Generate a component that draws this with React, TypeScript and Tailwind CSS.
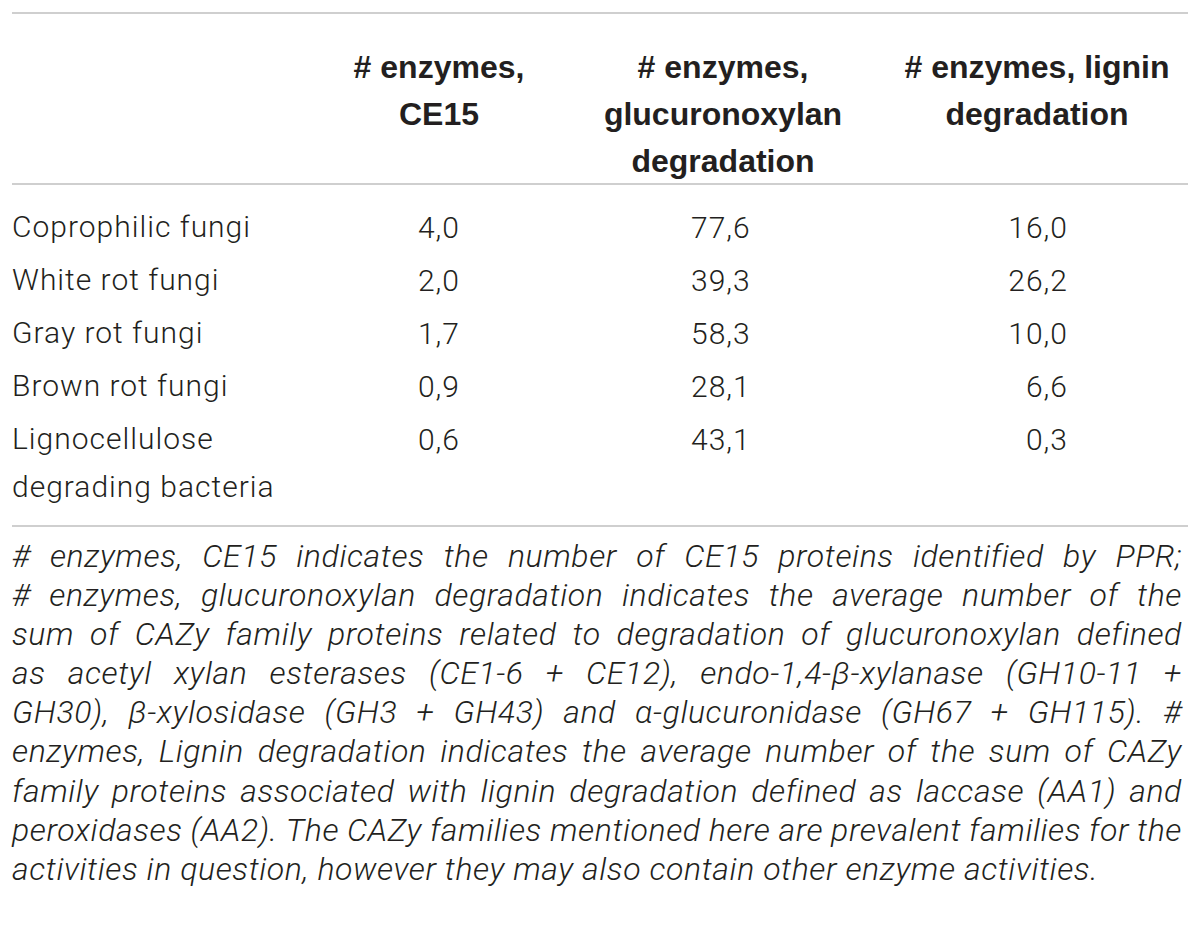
import React from 'react'

interface IRow {
  label: string[]
  ce15: string
  glucuronoxylan: string
  lignin: string
}

const rows: IRow[] = [
  { label: ['Coprophilic fungi'], ce15: '4,0', glucuronoxylan: '77,6', lignin: '16,0' },
  { label: ['White rot fungi'], ce15: '2,0', glucuronoxylan: '39,3', lignin: '26,2' },
  { label: ['Gray rot fungi'], ce15: '1,7', glucuronoxylan: '58,3', lignin: '10,0' },
  { label: ['Brown rot fungi'], ce15: '0,9', glucuronoxylan: '28,1', lignin: '6,6' },
  { label: ['Lignocellulose', 'degrading bacteria'], ce15: '0,6', glucuronoxylan: '43,1', lignin: '0,3' }
]

// justified lines of the footnote, broken as in the printed table
const captionLines = [
  '# enzymes, CE15 indicates the number of CE15 proteins identified by PPR;',
  '# enzymes, glucuronoxylan degradation indicates the average number of the',
  'sum of CAZy family proteins related to degradation of glucuronoxylan defined',
  'as acetyl xylan esterases (CE1-6 + CE12), endo-1,4-β-xylanase (GH10-11 +',
  'GH30), β-xylosidase (GH3 + GH43) and α-glucuronidase (GH67 + GH115). #',
  'enzymes, Lignin degradation indicates the average number of the sum of CAZy',
  'family proteins associated with lignin degradation defined as laccase (AA1) and',
  'peroxidases (AA2). The CAZy families mentioned here are prevalent families for the'
]

const cols = 'grid grid-cols-[318px_218px_350px_278px]'

const App: React.FC = () => {
  return (
    <div className="w-[1200px] h-[929px] bg-white px-3 pt-3 text-[#231f20] font-['Roboto','Liberation_Sans',sans-serif]">
      <div className="border-t-2 border-[#cfcfcf]">
        {/* header */}
        <div
          className={`${cols} border-b-2 border-[#cfcfcf] pt-[30px] pb-[6px] h-[171px] font-['Liberation_Sans','Arial',sans-serif] font-bold text-[32px] leading-[47px] text-center`}
        >
          <div />
          <div>
            # enzymes,
            <br />
            CE15
          </div>
          <div>
            # enzymes,
            <br />
            glucuronoxylan
            <br />
            degradation
          </div>
          <div>
            # enzymes, lignin
            <br />
            degradation
          </div>
        </div>

        {/* body */}
        <div className="border-b-2 border-[#cfcfcf] pt-[16px] pb-[20px] h-[342px] font-light text-[30px] tracking-[1px] leading-[53px]">
          {rows.map((row) => (
            <div key={row.ce15 + row.lignin} className={cols}>
              <div className="leading-[48px] pt-[2px]">
                {row.label.map((l) => (
                  <div key={l}>{l}</div>
                ))}
              </div>
              <div className="text-center">{row.ce15}</div>
              <div className="text-center">
                <span className="inline-block w-[64px] text-left">{row.glucuronoxylan}</span>
              </div>
              <div className="text-center">
                <span className="inline-block w-[62px] text-right">{row.lignin}</span>
              </div>
            </div>
          ))}
        </div>

        {/* caption */}
        <div className="pt-[10px] pr-[6px] italic font-light text-[32px] tracking-[0.6px] leading-[39.1px]">
          {captionLines.map((line) => (
            <div key={line} className="flex justify-between whitespace-nowrap">
              {line.split(' ').map((word, i) => (
                <span key={i}>{word}</span>
              ))}
            </div>
          ))}
          <div className="whitespace-nowrap">
            activities in question, however they may also contain other enzyme activities.
          </div>
        </div>
      </div>
    </div>
  )
}

export default App
